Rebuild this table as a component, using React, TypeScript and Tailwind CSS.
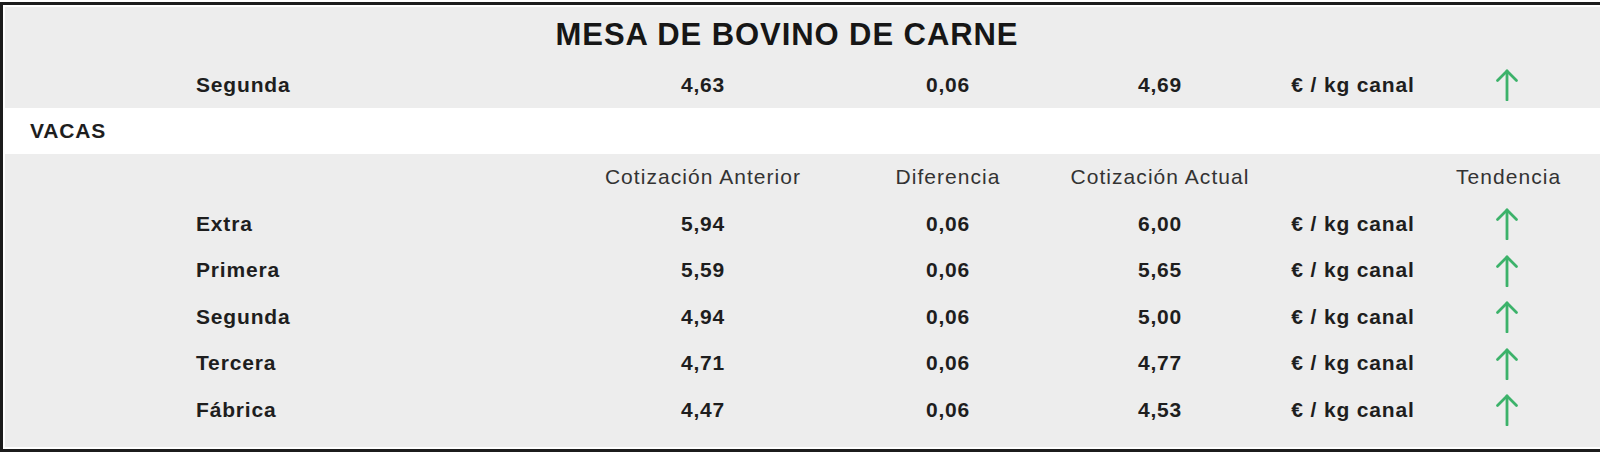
import React from "react";

const cols = "grid grid-cols-[575px_246px_244px_180px_206px_102px_1fr] items-center";

const rows = [
  { name: "Extra", prev: "5,94", diff: "0,06", curr: "6,00" },
  { name: "Primera", prev: "5,59", diff: "0,06", curr: "5,65" },
  { name: "Segunda", prev: "4,94", diff: "0,06", curr: "5,00" },
  { name: "Tercera", prev: "4,71", diff: "0,06", curr: "4,77" },
  { name: "Fábrica", prev: "4,47", diff: "0,06", curr: "4,53" },
];

function UpArrow() {
  return (
    <svg width="24" height="34" viewBox="0 0 24 34" fill="none" className="mx-auto">
      <path d="M12 4V33" stroke="#3cb26a" strokeWidth="2.8" strokeLinecap="round" />
      <path d="M2.5 13.5L12 4l9.5 9.5" stroke="#3cb26a" strokeWidth="2.8" strokeLinecap="round" strokeLinejoin="round" />
    </svg>
  );
}

function PriceRow({ name, prev, diff, curr }: { name: string; prev: string; diff: string; curr: string }) {
  return (
    <div className={`${cols} h-[46.5px] font-bold text-[21px] tracking-[0.04em] text-[#1e1e1e]`}>
      <div className="pl-[191px]">{name}</div>
      <div className="text-center">{prev}</div>
      <div className="text-center">{diff}</div>
      <div className="text-center">{curr}</div>
      <div className="text-center">€ / kg canal</div>
      <div>
        <UpArrow />
      </div>
      <div />
    </div>
  );
}

export default function App() {
  return (
    <main
      className="h-[462px] w-full overflow-hidden bg-white pt-[2px]"
      style={{ fontFamily: '"Liberation Sans", Arial, sans-serif' }}
    >
      <div className="border-t-[3px] border-b-[3px] border-l-[3px] border-solid border-[#1c1c1c] bg-white py-[2px] pl-[2px]">
        <div className="bg-[#ededed] pb-[14px]">
          <div className="flex h-[54px] items-center justify-center pr-[31px] pt-[2px] text-[31px] font-bold tracking-[0.03em] text-[#161616]">
            MESA DE BOVINO DE CARNE
          </div>
          <PriceRow name="Segunda" prev="4,63" diff="0,06" curr="4,69" />

          <div className="flex h-[46px] items-center bg-white pl-[25px] text-[21px] font-bold tracking-[0.04em] text-[#1e1e1e]">
            VACAS
          </div>

          <div className={`${cols} h-[46.5px] text-[21px] tracking-[0.05em] text-[#333]`}>
            <div />
            <div className="whitespace-nowrap text-center">Cotización Anterior</div>
            <div className="text-center">Diferencia</div>
            <div className="whitespace-nowrap text-center">Cotización Actual</div>
            <div />
            <div className="whitespace-nowrap text-center">Tendencia</div>
            <div />
          </div>

          {rows.map((r) => (
            <PriceRow key={r.name} {...r} />
          ))}
        </div>
      </div>
    </main>
  );
}
